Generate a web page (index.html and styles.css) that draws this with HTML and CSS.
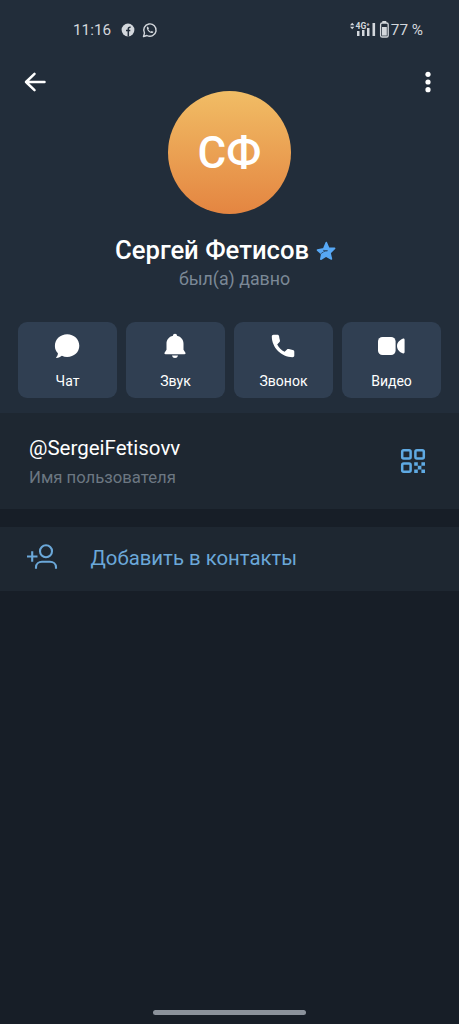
FILE: index.html
```html
<!DOCTYPE html>
<html lang="ru">
<head>
<meta charset="utf-8">
<title>Сергей Фетисов</title>
<link rel="stylesheet" href="styles.css">
</head>
<body>
<main class="screen">
  <header class="profile">
    <div class="status">
      <span class="clock">11:16</span>
      <svg class="status-app" width="14" height="14" viewBox="0 0 14 14"><circle cx="7" cy="7" r="6.4" fill="#d3d7dc"/><path d="M7.300 13.500V5.800Q7.300 4 9.600 4.300M5 7.600h4.300" fill="none" stroke="#222d3a" stroke-width="1.500"/></svg>
      <svg class="status-app" width="16" height="16" viewBox="0 0 16 16"><path d="M1.500 14.500l1-3.400A6.200 6.200 0 1 1 4.900 13.500z" fill="none" stroke="#d3d7dc" stroke-width="1.400" stroke-linejoin="round"/><path d="M5.900 4.500c-.8.2-1.300 1-1 1.900.6 2.400 2.300 4 4.600 4.600.9.200 1.700-.3 1.900-1.200l-1.800-.9-.8.800C7.700 9.200 6.900 8.400 6.300 7.300l.7-.8z" fill="#d3d7dc"/></svg>
      <svg class="signal" width="40" height="20" viewBox="350 20 40 20">
        <path d="M350 25.200l2.200-2.400 2.200 2.400zM350 26.800l2.200 2.400 2.200-2.400z" fill="#d3d7dc"/>
        <path d="M357 31h2.500v5H357zM362 30h2.500v6H362zM367 28h2.500v8H367zM372.500 23h2.600v13h-2.600z" fill="#d3d7dc"/>
        <text class="network" x="355.500" y="29.300">4G⁺</text>
        <path d="M382.300 21h4v2h-4z" fill="#d3d7dc"/><rect x="380.600" y="23" width="7.600" height="14" rx="1.600" fill="none" stroke="#d3d7dc" stroke-width="1.300"/><path d="M382 27h4.800v8.600H382z" fill="#d3d7dc"/>
      </svg>
      <span class="charge">77 %</span>
    </div>
    <div class="top">
      <svg class="back" width="24" height="24" viewBox="0 0 24 24"><path d="M21.500 12H3M11.500 3.800L3 12l8.500 8.200" fill="none" stroke="#fff" stroke-width="2.500" stroke-linecap="round" stroke-linejoin="round"/></svg>
      <div class="avatar">СФ</div>
      <svg class="more" width="8" height="24" viewBox="0 0 8 24" fill="#fff"><circle cx="4" cy="4.300" r="2.600"/><circle cx="4" cy="12" r="2.600"/><circle cx="4" cy="19.700" r="2.600"/></svg>
    </div>
    <div class="name-row">
      <h1 class="name">Сергей Фетисов</h1>
      <svg class="star" width="20" height="20" viewBox="0 0 20 20"><path d="M10.300 1.500l2.300 5.500 6 .4-4.600 4.500 1.400 6.100-5.400-2.900-5.200 3.100 1-5.200-4.300-3.900 6.200-1.300z" fill="#57a8f5" stroke="#57a8f5" stroke-width="1.600" stroke-linejoin="round"/><path d="M4.500 13.200C6.300 11.200 8.500 10.100 11.500 9.700L7.500 9.400" fill="none" stroke="#2c4c6e" stroke-width=".9" stroke-linecap="round"/></svg>
    </div>
    <p class="seen">был(а) давно</p>
    <nav class="actions">
      <button class="action"><svg width="28" height="28" viewBox="0 0 28 28"><path d="M14.200 2.300C21 2.300 26.300 7.300 26.300 13.800S21 25 14.200 25c-2 0-3.700-.4-5.300-1.200-1.500 1.200-3.400 2-5.300 2.100-.6 0-.6-.5-.2-.9 1-1 1.500-2.300 1.500-3.800C3 19.500 1.900 17 1.900 14 1.900 7.300 7.300 2.300 14.200 2.300z" fill="#fff"/></svg><span>Чат</span></button>
      <button class="action"><svg width="28" height="28" viewBox="0 0 28 28"><path d="M14 1.800c1.300 0 2 .8 2 2 4.200 1 6.500 4 6.500 8v6l1.800 2.700c.6.900.2 1.700-.9 1.700H4.600c-1.100 0-1.500-.8-.9-1.700l1.800-2.700v-6c0-4 2.300-7 6.500-8 0-1.200.7-2 2-2zM11 23.500h6c-.4 1.700-1.400 2.500-3 2.500s-2.600-.8-3-2.500z" fill="#fff"/></svg><span>Звук</span></button>
      <button class="action"><svg width="28" height="28" viewBox="0 0 28 28"><path d="M4.500 2.700h3.800c1 0 1.700.6 1.800 1.500.1 1.400.4 2.700.8 4 .2.700.1 1.300-.4 1.800L8.200 12.400c1.700 3.300 4.100 5.700 7.400 7.400l2.400-2.300c.5-.5 1.100-.6 1.800-.4 1.300.4 2.600.7 4 .8.900.1 1.500.8 1.500 1.800v3.800c0 1.100-.7 1.700-1.800 1.700C12.500 25.200 2.800 15.500 2.800 4.500c0-1.100.6-1.800 1.700-1.800z" fill="#fff"/></svg><span>Звонок</span></button>
      <button class="action"><svg width="28" height="28" viewBox="0 0 28 28"><rect x="1" y="5" width="17.600" height="18" rx="4.500" fill="#fff"/><path d="M20 14c0-3.800 2.700-6 5.600-7.300 1.100-.5 2 0 2 1.200v12.200c0 1.200-.9 1.700-2 1.200C22.700 20 20 17.800 20 14z" fill="#fff"/></svg><span>Видео</span></button>
    </nav>
  </header>
  <section class="username">
    <div>
      <div class="handle">@SergeiFetisovv</div>
      <div class="caption">Имя пользователя</div>
    </div>
    <svg class="qr" width="26" height="26" viewBox="0 0 26 26"><g fill="none" stroke="#5faae3" stroke-width="2.500"><rect x="2.200" y="2.200" width="8.400" height="8.400" rx="1.500"/><rect x="15.400" y="2.200" width="8.400" height="8.400" rx="1.500"/><rect x="2.200" y="15.400" width="8.400" height="8.400" rx="1.500"/></g><path d="M14.200 14.200h3.600v3.600h-3.600zM21.400 14.200H25v3.600h-3.600zM17.800 17.800h3.600v3.600h-3.600zM14.200 21.400h3.600V25h-3.600zM21.400 21.400H25V25h-3.600z" fill="#5faae3"/></svg>
  </section>
  <section class="add">
    <svg width="32" height="26" viewBox="0 0 32 26"><path d="M1 12.500h10.500M6.200 7.200v10.600M10 24.800v-1.500c0-3.500 2.800-5.500 6-5.500h8c3.200 0 6 2 6 5.500v1.500" fill="none" stroke="#6ba8d9" stroke-width="2.100"/><circle cx="20" cy="7.300" r="6" fill="none" stroke="#6ba8d9" stroke-width="2.100"/></svg>
    <span class="add-label">Добавить в контакты</span>
  </section>
  <div class="home"></div>
</main>
</body>
</html>
```

FILE: styles.css
```css
* { box-sizing: border-box; }
body { margin: 0; background: #171e27; font-family: Roboto, "Noto Sans", sans-serif; color: #fff; }
.screen { display: flex; flex-direction: column; width: 459px; height: 1024px; }
.profile { height: 413px; background: #222d3a; }
.status { display: flex; align-items: center; height: 59px; padding: 0 36px 0 73px; font-size: 15.300px; color: #d3d7dc; }
.clock { width: 48px; }
.status-app + .status-app { margin-left: 7px; }
.signal { margin-left: auto; }
.network { font-size: 8.500px; font-weight: 700; fill: #d3d7dc; stroke: #222d3a; stroke-width: 1px; paint-order: stroke; }
.charge { margin-left: 1px; white-space: nowrap; }
.top { display: grid; grid-template-columns: 145px 123px 1fr; height: 155px; padding: 11px 27px 0 23px; }
.avatar { display: flex; align-items: center; justify-content: center; width: 123px; height: 123px; margin-top: 21px; border-radius: 50%; background: linear-gradient(#f1bd65, #e48541); font-size: 44px; font-weight: 500; }
.more { margin-left: auto; }
.name-row { display: flex; align-items: center; height: 34px; margin-top: 19px; padding-left: 115px; }
.name { margin: 0; font-size: 25.650px; font-weight: 500; white-space: nowrap; }
.star { margin: 1px 0 0 7px; }
.seen { margin: 1px 0 0 10px; height: 22px; font-size: 17.800px; line-height: 21px; text-align: center; color: #7b8896; }
.actions { display: grid; grid-template-columns: repeat(4, 99px); gap: 9px; padding: 32px 18px 0; }
.action { display: flex; flex-direction: column; align-items: center; gap: 13px; height: 76px; padding: 10px 0 0; border: 0; border-radius: 9px; background: #303f52; color: #fff; font: 14px/17px Roboto, sans-serif; }
.action svg { margin-left: -1px; }
.username { display: flex; justify-content: space-between; height: 96px; padding: 21px 33px 0 29px; background: #1e2731; }
.handle { font-size: 20.500px; line-height: 28px; }
.caption { margin-top: 5px; font-size: 16.700px; line-height: 22px; color: #6c7782; }
.qr { margin-top: 14px; }
.add { display: flex; align-items: center; gap: 32.500px; height: 64px; margin-top: 18px; padding: 0 26px 4px; background: #1e2731; }
.add-label { padding-top: 2px; font-size: 20.350px; color: #6ba8d9; white-space: nowrap; }
.home { width: 153px; height: 5px; margin: auto auto 9px; border-radius: 3px; background: #8b929b; }
```
